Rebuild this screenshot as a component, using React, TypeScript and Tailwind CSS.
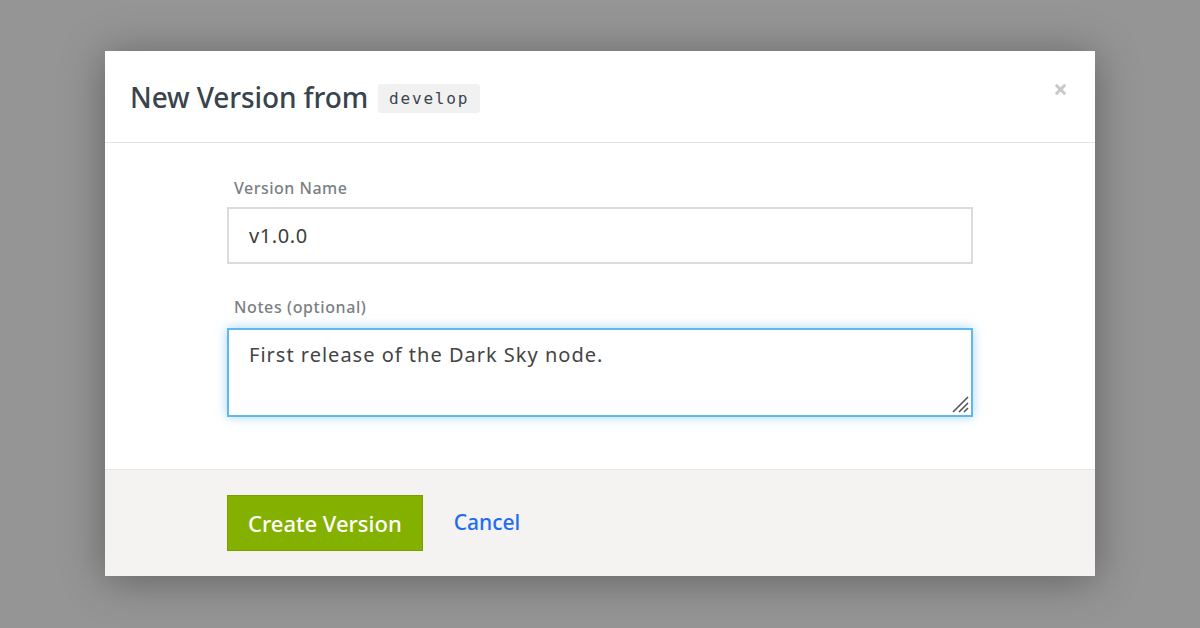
import { X } from 'lucide-react'

export default function App() {
  return (
    <div
      className="w-[1200px] h-[628px] bg-[#959595] pt-[51px] pl-[105px]"
      style={{ fontFamily: '"Noto Sans", "Open Sans", sans-serif' }}
    >
      <div className="w-[990px] h-[525px] bg-white shadow-[0_4px_40px_rgba(0,0,0,0.35)] flex flex-col">
        {/* header */}
        <div className="h-[92px] border-b border-[#e3e3e3] flex items-center justify-between pl-[25px] pr-[27px]">
          <div className="flex items-center gap-[10px]">
            <h2 className="text-[28px] font-medium text-[#39434c] tracking-[-0.1px] leading-none">New Version from</h2>
            <span
              className="bg-[#f1f1f1] rounded-[3px] px-[11px] h-[29px] flex items-center text-[16px] tracking-[1.8px] text-[#3b444d] mt-[4px]"
              style={{ fontFamily: '"DejaVu Sans Mono", "Liberation Mono", monospace' }}
            >
              develop
            </span>
          </div>
          <X className="w-[15px] h-[15px] text-[#c8c8c8] -mt-[14px]" strokeWidth={5} />
        </div>

        {/* body */}
        <div className="flex-1 px-[122px] pt-[35px] flex flex-col">
          <label className="text-[16px] font-medium tracking-[0.5px] text-[#7a7f84] mb-[9px] pl-[7px] leading-[20px]">
            Version Name
          </label>
          <div className="h-[57px] border-2 border-[#dcdcdc] flex items-center px-[20px] text-[20px] font-[450] tracking-[0.6px] text-[#3e3e3e]">
            v1.0.0
          </div>
          <label className="text-[16px] font-medium tracking-[0.6px] text-[#7a7f84] mt-[33px] mb-[11px] pl-[7px] leading-[20px]">
            Notes (optional)
          </label>
          <div className="relative h-[89px] border-2 border-[#62b7ee] shadow-[0_0_10px_rgba(92,180,236,0.55)] px-[20px] pt-[10px] text-[20px] font-[450] tracking-[1px] text-[#444]">
            First release of the Dark Sky node.
            <svg className="absolute right-[2px] bottom-[2px]" width="20" height="20" viewBox="0 0 20 20">
              <path d="M19 4 L4 19 M19 10 L10 19 M19 15 L15 19" stroke="#555" strokeWidth="1.6" />
            </svg>
          </div>
        </div>

        {/* footer */}
        <div className="h-[107px] bg-[#f4f3f2] border-t border-[#e6e6e6] flex items-center px-[122px] gap-[31px]">
          <button className="h-[56px] px-[20px] bg-[#84b100] border border-[#779f00] text-white text-[22px] font-medium">
            Create Version
          </button>
          <a className="text-[21px] font-medium text-[#1e6cf2]">Cancel</a>
        </div>
      </div>
    </div>
  )
}
